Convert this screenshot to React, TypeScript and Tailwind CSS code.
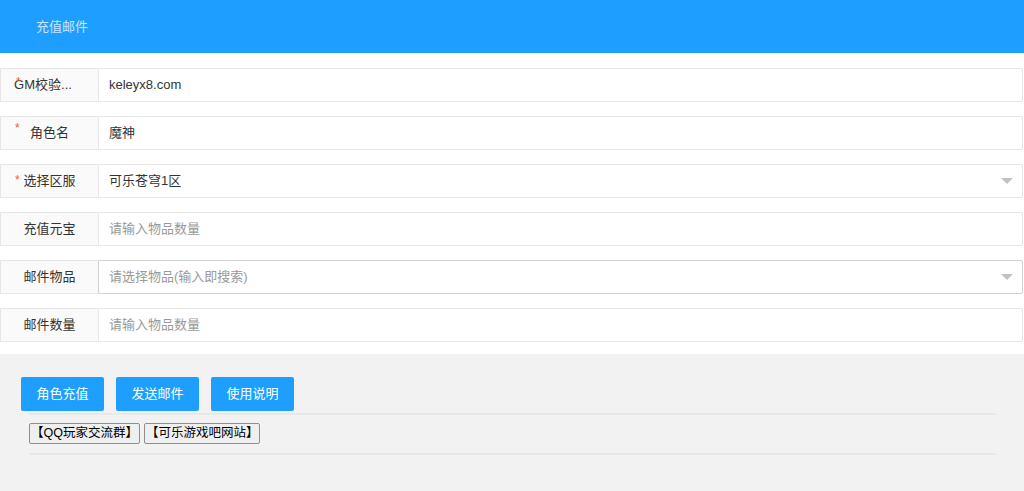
import React from "react";

type Field = {
  label: string;
  value?: string;
  placeholder?: string;
  required?: boolean;
  select?: boolean;
  dark?: boolean;
  star?: string;
  labelClass?: string;
};

const fields: Field[] = [
  { label: "GM校验...", value: "keleyx8.com", required: true, star: "top-[7px] left-[15px]", labelClass: "pr-[13px]" },
  { label: "角色名", value: "魔神", required: true, star: "top-[5px] left-[14px]" },
  { label: "选择区服", value: "可乐苍穹1区", required: true, select: true, star: "top-[9px] left-[14px]" },
  { label: "充值元宝", placeholder: "请输入物品数量" },
  { label: "邮件物品", placeholder: "请选择物品(输入即搜索)", select: true, dark: true },
  { label: "邮件数量", placeholder: "请输入物品数量" },
];

function Caret() {
  return (
    <svg viewBox="0 0 12 6" className="absolute right-[9px] top-1/2 h-[6px] w-[12px] -translate-y-1/2" aria-hidden="true">
      <path d="M0 0h12L6 6z" fill="#c2c2c2" />
    </svg>
  );
}

function Row({ f }: { f: Field }) {
  return (
    <div className="flex h-[34px]">
      <div
        className={`relative flex w-[98px] shrink-0 items-center justify-center border border-r-0 border-[#e6e6e6] bg-[#fafafa] text-[13px] text-[#333] ${
          f.labelClass ?? ""
        }`}
      >
        <span>{f.label}</span>
        {f.required && (
          <span className={`absolute text-[12px] leading-none text-[#ff5722] ${f.star}`}>*</span>
        )}
      </div>
      <div
        className={`relative flex flex-1 items-center rounded-r-[2px] border bg-white pl-[10px] text-[13px] ${
          f.dark ? "border-[#d2d2d2]" : "border-[#e6e6e6]"
        }`}
      >
        {f.value ? (
          <span className="text-[#333]">{f.value}</span>
        ) : (
          <span className="text-[#999]">{f.placeholder}</span>
        )}
        {f.select && <Caret />}
      </div>
    </div>
  );
}

export default function App() {
  return (
    <div className="flex h-[491px] flex-col overflow-hidden bg-white font-[Liberation_Sans,Noto_Sans_CJK_SC,sans-serif]">
      <header className="flex h-[53px] shrink-0 items-center bg-[#1e9fff] pl-[36px] text-[13px] text-white/75">
        充值邮件
      </header>

      <div className="flex flex-col gap-[14px] pb-[12px] pt-[15px] pr-px">
        {fields.map((f) => (
          <Row key={f.label} f={f} />
        ))}
      </div>

      <div className="flex-1 bg-[#f2f2f2] pl-[21px] pr-[28px] pt-[23px]">
        <div className="flex gap-[12px]">
          {["角色充值", "发送邮件", "使用说明"].map((b) => (
            <button
              key={b}
              className="flex h-[34px] w-[83px] items-center justify-center rounded-[2px] bg-[#1e9fff] text-[13px] text-white"
            >
              {b}
            </button>
          ))}
        </div>
        <div className="ml-[8px] mt-[2px] border-t-2 border-[#e8e8e8]" />
        <div className="ml-[8px] flex gap-[4px] pt-[8px]">
          {["【QQ玩家交流群】", "【可乐游戏吧网站】"].map((b) => (
            <button
              key={b}
              className="h-[21px] rounded-[2px] border border-[#8f8f8f] bg-[#efefef] px-px text-[12.5px] leading-none text-black"
            >
              {b}
            </button>
          ))}
        </div>
        <div className="ml-[8px] mt-[9px] border-t-2 border-[#e8e8e8]" />
      </div>
    </div>
  );
}
